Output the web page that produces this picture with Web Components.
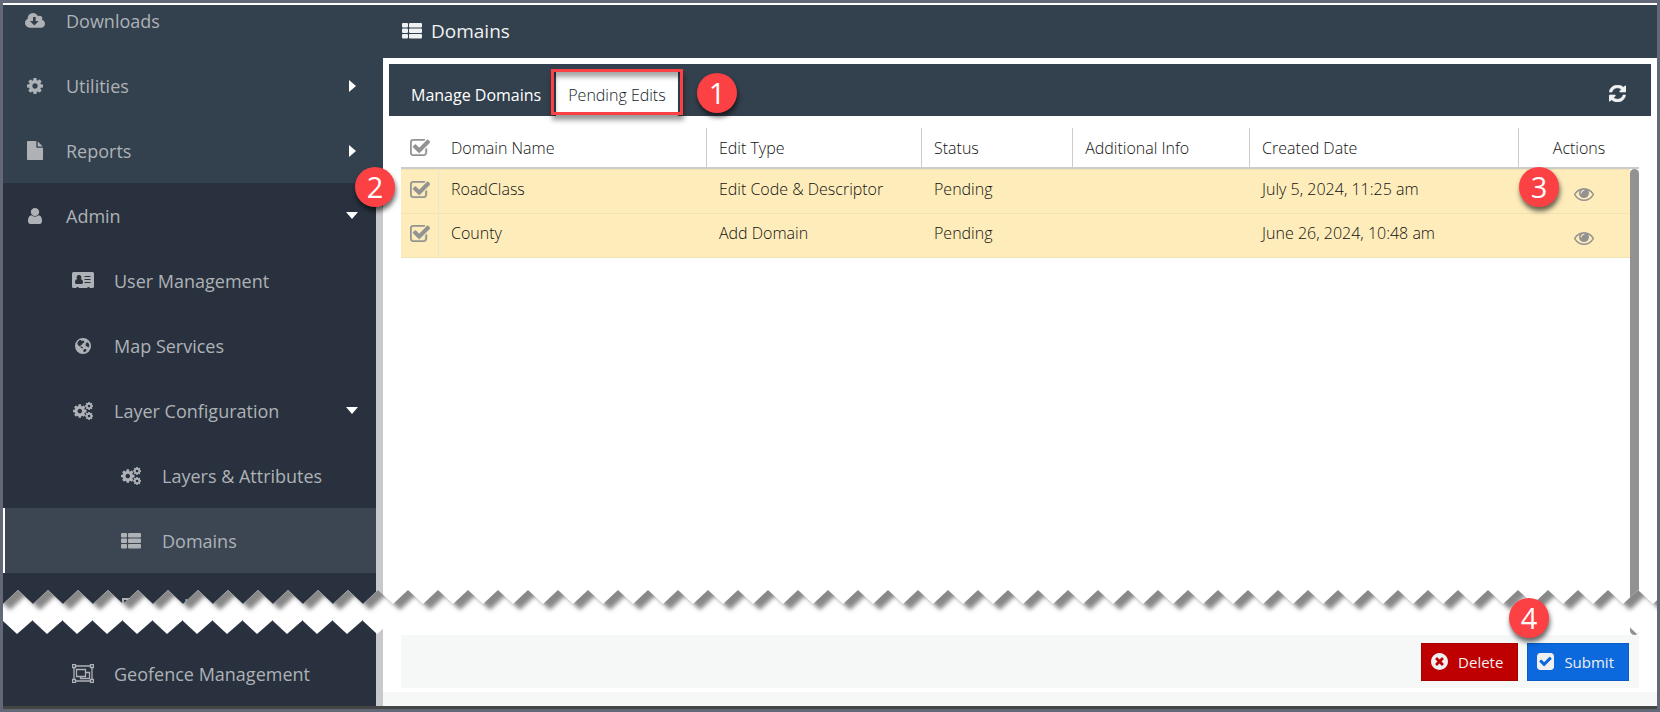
<!DOCTYPE html>
<html lang="en">
<head>
<meta charset="utf-8">
<meta name="viewport" content="width=device-width, initial-scale=1">
<title>Domains</title>
<style>
	html, body {
		margin: 0;
		height: 100%;
	}
	body {
		font-family: "Open Sans", "Noto Sans", sans-serif;
		font-size: 16px;
		color: #111;
	}
</style>
</head>
<body>
<app-frame>
	<side-nav slot="nav">
		<nav-item icon="cloud" label="Downloads"></nav-item>
		<nav-item icon="cog" label="Utilities" arrow="right"></nav-item>
		<nav-item icon="file" label="Reports" arrow="right"></nav-item>
		<nav-item icon="user" label="Admin" arrow="down" dark></nav-item>
		<nav-item icon="idcard" label="User Management" level="1" dark></nav-item>
		<nav-item icon="globe" label="Map Services" level="1" dark></nav-item>
		<nav-item icon="cogs" label="Layer Configuration" level="1" arrow="down" dark></nav-item>
		<nav-item icon="cogs" label="Layers &amp; Attributes" level="2" dark></nav-item>
		<nav-item icon="list" label="Domains" level="2" dark active></nav-item>
		<nav-item icon="table" label="Roles" level="2" dark></nav-item>
		<nav-item icon="group" label="Geofence Management" level="1" dark last></nav-item>
	</side-nav>
	<page-title icon="list">Domains</page-title>
	<tab-bar slot="tabs">
		<tab-button>Manage Domains</tab-button>
		<tab-button selected>Pending Edits</tab-button>
	</tab-bar>
	<domain-table slot="table"></domain-table>
	<action-button slot="actions" icon="times" kind="delete">Delete</action-button>
	<action-button slot="actions" icon="check" kind="submit">Submit</action-button>
</app-frame>

<script>
const COG = '<path d="M1152 896q0-106-75-181t-181-75-181 75-75 181 75 181 181 75 181-75 75-181zm512-109v222q0 12-8 23t-20 13l-185 28q-19 54-39 91 35 50 107 138 10 12 10 25t-9 23q-27 37-99 108t-94 71q-12 0-26-9l-138-108q-44 23-91 38-16 136-29 186-7 28-36 28h-222q-14 0-24.500-8.500t-11.500-21.500l-28-184q-49-16-90-37l-141 107q-10 9-25 9-14 0-25-11-126-114-165-168-7-10-7-23 0-12 8-23 15-21 51-66.500t54-70.500q-27-50-41-99l-183-27q-13-2-21-12.500t-8-23.500v-222q0-12 8-23t19-13l186-28q14-46 39-92-40-57-107-138-10-12-10-24 0-10 9-23 26-36 98.500-107.500t94.500-71.500q13 0 26 10l138 107q44-23 91-38 16-136 29-186 7-28 36-28h222q14 0 24.500 8.500t11.500 21.500l28 184q49 16 90 37l142-107q9-9 24-9 13 0 25 10 129 119 165 170 7 8 7 22 0 12-8 23-15 21-51 66.500t-54 70.500q26 50 41 98l183 28q13 2 21 12.500t8 23.500z"/>';

// name: [viewBox, width, height, markup]
const ICONS = {
	cloud: ['0 128 1920 1536', 20, 16, '<path d="M1280 928q0-14-9-23t-23-9h-224v-352q0-13-9.500-22.500t-22.500-9.500h-192q-13 0-22.500 9.500t-9.500 22.500v352h-224q-13 0-22.500 9.500t-9.500 22.500q0 14 9 23l352 352q9 9 23 9t23-9l351-351q10-12 10-24zm640 224q0 159-112.500 271.500t-271.500 112.500h-1088q-185 0-316.500-131.500t-131.500-316.500q0-130 70-240t188-165q-2-30-2-43 0-212 150-362t362-150q156 0 285.500 87t188.500 231q71-62 166-62 106 0 181 75t75 181q0 76-41 138 130 31 213.500 135.500t83.500 238.500z"/>'],
	cog: ['128 128 1536 1536', 16, 16, COG],
	cogs: ['0 0 20 18', 20, 18,
		'<g transform="translate(-1.100 1.200) scale(.0088)">' + COG + '</g>' +
		'<g transform="translate(11.400 -.700) scale(.0052)">' + COG + '</g>' +
		'<g transform="translate(11.400 9.300) scale(.0052)">' + COG + '</g>'],
	file: ['128 0 1536 1792', 16, 19, '<path d="M1152 512v-472q22 14 36 28l408 408q14 14 28 36h-472zm-128 32q0 40 28 68t68 28h544v1056q0 40-28 68t-68 28h-1344q-40 0-68-28t-28-68v-1600q0-40 28-68t68-28h800v544z"/>'],
	user: ['256 128 1280 1536', 14, 16, '<path d="M1536 1399q0 109-62.500 187t-150.500 78h-854q-88 0-150.500-78t-62.500-187q0-85 8.500-160.500t31.500-152 58.500-131 94-89 134.500-34.500q131 128 313 128t313-128q76 0 134.500 34.500t94 89 58.500 131 31.500 152 8.500 160.500zm-256-887q0 159-112.500 271.500t-271.500 112.500-271.500-112.500-112.500-271.500 112.500-271.500 271.500-112.500 271.500 112.500 112.500 271.500z"/>'],
	idcard: ['0 0 22 17', 22, 17, '<path fill-rule="evenodd" d="M1.500 0h19a1.500 1.500 0 0 1 1.500 1.500v13a1.500 1.500 0 0 1-1.500 1.500h-3v-1h-2v1h-9v-1h-2v1h-3a1.500 1.500 0 0 1-1.500-1.500v-13a1.500 1.500 0 0 1 1.500-1.500zM7 3a2.400 2.400 0 0 0-1.700 4.100C3.800 7.400 3 8.600 3 10.600c0 .800.500 1.400 1.300 1.400h5.400c.800 0 1.300-.600 1.300-1.400 0-2-.800-3.200-2.300-3.500A2.400 2.400 0 0 0 7 3zM12.500 4v1h6v-1zM12.500 7v1h6v-1zM12.500 10v1h6v-1z"/>'],
	globe: ['0 0 16 16', 16, 16, '<path fill-rule="evenodd" d="M8 0a8 8 0 1 1 0 16a8 8 0 0 1 0-16zM4.600 2.100L2.900 3.800 2.300 5.800l1.500 2.300 1.600.5.700 1.400 1.500.6.400-1-1.300-.9-1.200-.4.200-1.200 1.500-.3.500-1.500 1.800-1-.5-1.300-1.400-.4-1 .7-.6-1.200zM10.800 5.200l2-.9 1.200 1.600.3 2.300-1.100 1.300-1.300-1.200-1.300-.4zM8.800 11.200l2-.2.900 1-1 1.400-1.600.9-.9-1.400z"/>'],
	list: ['0 0 20 16', 20, 16, '<path d="M1 0h4q1 0 1 1v2.500q0 1-1 1H1q-1 0-1-1V1q0-1 1-1zM8 0h11q1 0 1 1v2.500q0 1-1 1H8q-1 0-1-1V1q0-1 1-1zM1 5.500h4q1 0 1 1V9q0 1-1 1H1q-1 0-1-1V6.500q0-1 1-1zM8 5.500h11q1 0 1 1V9q0 1-1 1H8q-1 0-1-1V6.500q0-1 1-1zM1 11h4q1 0 1 1v2.500q0 1-1 1H1q-1 0-1-1V12q0-1 1-1zM8 11h11q1 0 1 1v2.500q0 1-1 1H8q-1 0-1-1V12q0-1 1-1z"/>'],
	table: ['0 0 20 16', 20, 16, '<path fill-rule="evenodd" d="M1 0h18v16H1zM3 2v12h14V2zM5 4h4v3H5zM11 4h4v3h-4z"/>'],
	group: ['0 0 22 19', 22, 19, '<path fill="none" stroke="currentColor" d="M.5.500h3v3h-3zM18.500.500h3v3h-3zM.5 15.500h3v3h-3zM18.500 15.500h3v3h-3zM4 2h14M4 17h14M2 4v11M20 4v11M4.500 5.500h9v7h-9zM13.500 8.500h4v6h-9v-2" stroke-width="1.300"/>'],
	refresh: ['128 128 1536 1536', 17, 17, '<path stroke="currentColor" stroke-width="50" d="M1639 1056q0 5-1 7-64 268-268 434.500t-478 166.500q-146 0-282.500-55t-243.500-157l-129 129q-19 19-45 19t-45-19-19-45v-448q0-26 19-45t45-19h448q26 0 45 19t19 45-19 45l-137 137q71 66 161 102t187 36q134 0 250-65t186-179q11-17 53-117 8-23 30-23h192q13 0 22.500 9.500t9.500 22.500zm25-800v448q0 26-19 45t-45 19h-448q-26 0-45-19t-19-45 19-45l138-138q-148-137-349-137-134 0-250 65t-186 179q-11 17-53 117-8 23-30 23h-199q-13 0-22.500-9.500t-9.500-22.500v-7q65-268 270-434.500t480-166.500q146 0 284 55.500t245 156.500l130-129q19-19 45-19t45 19 19 45z"/>'],
	eye: ['0 384 1792 1152', 20, 13, '<path d="M1664 960q-152-236-381-353 61 104 61 225 0 185-131.500 316.500t-316.500 131.500-316.500-131.500-131.500-316.500q0-121 61-225-229 117-381 353 133 205 333.500 326.500t434.500 121.500 434.500-121.500 333.500-326.500zm-720-384q0-20-14-34t-34-14q-125 0-214.500 89.500t-89.500 214.500q0 20 14 34t34 14 34-14 14-34q0-86 61-147t147-61q20 0 34-14t14-34zm848 384q0 34-20 69-140 230-376.500 368.500t-499.500 138.500-499.500-139-376.500-368q-20-35-20-69t20-69q140-229 376.500-368t499.500-139 499.500 139 376.500 368q20 35 20 69z"/>'],
	times: ['128 128 1536 1536', 17, 17, '<path d="M1277 1122q0-26-19-45l-181-181 181-181q19-19 19-45 0-27-19-46l-90-90q-19-19-46-19-26 0-45 19l-181 181-181-181q-19-19-45-19-27 0-46 19l-90 90q-19 19-19 46 0 26 19 45l181 181-181 181q-19 19-19 45 0 27 19 46l90 90q19 19 46 19 26 0 45-19l181-181 181 181q19 19 45 19 27 0 46-19l90-90q19-19 19-46zm387-226q0 209-103 385.500t-279.500 279.500-385.500 103-385.500-103-279.500-279.500-103-385.500 103-385.500 279.500-279.500 385.500-103 385.500 103 279.500 279.500 103 385.500z"/>'],
	check: ['128 128 1536 1536', 17, 17, '<path d="M813 1299l614-614q19-19 19-45t-19-45l-102-102q-19-19-45-19t-45 19l-467 467-211-211q-19-19-45-19t-45 19l-102 102q-19 19-19 45t19 45l358 358q19 19 45 19t45-19zm851-883v960q0 119-84.500 203.500t-203.500 84.500h-960q-119 0-203.500-84.500t-84.500-203.500v-960q0-119 84.500-203.500t203.500-84.500h960q119 0 203.500 84.500t84.500 203.500z"/>'],
	checko: ['64 128 1664 1408', 20, 17, '<path stroke="currentColor" stroke-width="40" d="M1472 930v318q0 119-84.500 203.500t-203.500 84.500h-832q-119 0-203.500-84.500t-84.500-203.500v-832q0-119 84.500-203.500t203.500-84.500h832q63 0 117 25 15 7 18 23 3 17-9 29l-49 49q-10 10-23 10-3 0-9-2-23-6-45-6h-832q-66 0-113 47t-47 113v832q0 66 47 113t113 47h832q66 0 113-47t47-113v-254q0-13 9-22l64-64q10-10 23-10 6 0 12 3 20 8 20 29zm231-489l-814 814q-24 24-57 24t-57-24l-430-430q-24-24-24-57t24-57l110-110q24-24 57-24t57 24l263 263 647-647q24-24 57-24t57 24l110 110q24 24 24 57t-24 57z"/>'],
	right: ['0 0 7 12', 7, 12, '<path d="M0 0l7 6-7 6z"/>'],
	down: ['0 0 12 7', 12, 7, '<path d="M0 0h12l-6 7z"/>']
};

class FaIcon extends HTMLElement {
	constructor(){
		super();
		this.attachShadow({mode: 'open'});
	}
	connectedCallback() {
		const [box, width, height, markup] = ICONS[this.getAttribute('name')];
		this.shadowRoot.innerHTML = `
				<style>
				:host { display: inline-flex; }
				svg { display: block; fill: currentColor; }
				</style>
				<svg viewBox="${box}" width="${width}" height="${height}" preserveAspectRatio="none" aria-hidden="true">${markup}</svg>
		`;
	}
}

class NavItem extends HTMLElement {
	constructor(){
		super();
		this.attachShadow({mode: 'open'});
	}
	connectedCallback() {
		const arrow = this.getAttribute('arrow');
		const level = this.getAttribute('level') || 0;
		this.shadowRoot.innerHTML = `
				<style>
				:host {
					display: block;
					flex: none;
					background: #33404d;
				}
				:host([dark]) { background: #28313d; }
				:host([active]) {
					background: #3c4653;
					box-shadow: inset 2px 0 #fff;
				}
				:host([last]) { margin-top: auto; }
				a {
					display: flex;
					align-items: center;
					height: 65px;
					padding-left: calc(16px + ${level} * 48px);
					padding-right: 16px;
					color: #aeb2b7;
					font-size: 18px;
					text-decoration: none;
				}
				.icon {
					display: flex;
					justify-content: center;
					width: 32px;
					margin-right: 15px;
				}
				.label { flex: 1; white-space: nowrap; }
				.arrow {
					display: flex;
					justify-content: center;
					width: 16px;
					color: #fff;
				}
				</style>
				<a href="#">
					<span class="icon"><fa-icon name="${this.getAttribute('icon')}"></fa-icon></span>
					<span class="label"></span>
					${arrow ? `<span class="arrow"><fa-icon name="${arrow}"></fa-icon></span>` : ''}
				</a>
		`;
		this.shadowRoot.querySelector('.label').textContent = this.getAttribute('label');
	}
}

class SideNav extends HTMLElement {
	constructor(){
		super();
		let shadowRoot = this.attachShadow({mode: 'open'});
		shadowRoot.innerHTML = `
				<style>
				:host {
					display: flex;
					width: 380px;
					height: 100%;
					overflow: hidden;
					background: #33404d;
				}
				nav {
					flex: 1;
					display: flex;
					flex-direction: column;
					margin-top: -17px;
					background: #28313d;
				}
				.track {
					display: flex;
					width: 7px;
					padding-top: 200px;
				}
				.thumb {
					flex: 1;
					border-radius: 4px 4px 0 0;
					background: #c8c9cb;
				}
				</style>
				<nav><slot></slot></nav>
				<div class="track"><div class="thumb"></div></div>
		`;
	}
}

class PageTitle extends HTMLElement {
	constructor(){
		super();
		let shadowRoot = this.attachShadow({mode: 'open'});
		shadowRoot.innerHTML = `
				<style>
				:host {
					display: flex;
					align-items: center;
					box-sizing: border-box;
					height: 53px;
					padding: 0 0 2px 19px;
					background: #33404d;
					color: #f0f1f2;
				}
				h1 {
					margin: 0 0 0 9px;
					font-size: 19px;
					font-weight: 400;
				}
				</style>
				<fa-icon name="list"></fa-icon>
				<h1><slot></slot></h1>
		`;
	}
}

class TabButton extends HTMLElement {
	constructor(){
		super();
		let shadowRoot = this.attachShadow({mode: 'open'});
		shadowRoot.innerHTML = `
				<style>
				:host { display: flex; position: relative; }
				button {
					padding: 2px 12px 0;
					border: 0;
					background: none;
					color: #fff;
					font: inherit;
				}
				:host([selected]) button {
					background: #fff;
					color: #111c28;
					font-weight: 300;
				}
				/* highlight box drawn round the selected tab */
				:host([selected])::after {
					content: "";
					position: absolute;
					inset: -3px -5px 1px -5px;
					border: 3px solid #fc4144;
					box-shadow: 1px 5px 5px rgba(0, 0, 0, .4), inset 1px 5px 5px rgba(0, 0, 0, .35);
				}
				</style>
				<button type="button" role="tab"><slot></slot></button>
		`;
	}
	connectedCallback() {
		this.shadowRoot.querySelector('button').setAttribute('aria-selected', this.hasAttribute('selected'));
	}
}

class TabBar extends HTMLElement {
	constructor(){
		super();
		let shadowRoot = this.attachShadow({mode: 'open'});
		shadowRoot.innerHTML = `
				<style>
				:host {
					display: flex;
					height: 52px;
					box-sizing: border-box;
					padding: 8px 25px 0 10px;
					background: #33404d;
				}
				.tabs { display: flex; flex: 1; gap: 3px; }
				.refresh {
					display: flex;
					align-items: center;
					padding: 0 0 2px;
					border: 0;
					background: none;
					color: #f0f1f2;
				}
				</style>
				<div class="tabs" role="tablist"><slot></slot></div>
				<button class="refresh" type="button" aria-label="Refresh"><fa-icon name="refresh"></fa-icon></button>
		`;
	}
}

class TickBox extends HTMLElement {
	constructor(){
		super();
		this.attachShadow({mode: 'open'});
	}
	connectedCallback() {
		this.shadowRoot.innerHTML = `
				<style>
				:host { display: inline-flex; color: #929292; }
				label { display: grid; }
				input, fa-icon { grid-area: 1 / 1; }
				input {
					appearance: none;
					margin: 0;
					width: 20px;
					height: 17px;
				}
				fa-icon { pointer-events: none; }
				input:not(:checked) + fa-icon { opacity: .4; }
				</style>
				<label><input type="checkbox" checked aria-label="${this.getAttribute('label')}"><fa-icon name="checko"></fa-icon></label>
		`;
	}
}

const ROWS = [
	['RoadClass', 'Edit Code &amp; Descriptor', 'Pending', '', 'July 5, 2024, 11:25 am'],
	['County', 'Add Domain', 'Pending', '', 'June 26, 2024, 10:48 am']
];

class DomainTable extends HTMLElement {
	constructor(){
		super();
		let shadowRoot = this.attachShadow({mode: 'open'});
		const rows = ROWS.map(row => `
						<tr>
							<td class="tick"><tick-box label="Select ${row[0]}"></tick-box></td>
							${row.map(cell => `<td>${cell}</td>`).join('')}
							<td class="actions"><button type="button" aria-label="View ${row[0]}"><fa-icon name="eye"></fa-icon></button></td>
						</tr>`).join('');
		shadowRoot.innerHTML = `
				<style>
				:host {
					display: flex;
					flex: 1;
					min-height: 0;
				}
				.grid { flex: 1; }
				table {
					width: 100%;
					table-layout: fixed;
					border-collapse: separate;
					border-spacing: 0;
				}
				th, td {
					box-sizing: border-box;
					padding: 0 12px;
					text-align: left;
					font-weight: 300;
					white-space: nowrap;
				}
				th {
					height: 41px;
					border-bottom: 2px solid #ccc;
					border-right: 1px solid #ccc;
				}
				th:first-child, th:last-child { border-right: 0; }
				td {
					height: 44px;
					padding-bottom: 6px;
					border-bottom: 1px solid #f2e3b3;
					background: #feedbb;
				}
				tr:first-child td {
					height: 45px;
					border-top: 1px solid #f2e3b3;
				}
				.tick { padding: 0 9px 4px; }
				td.tick { padding-bottom: 8px; border-right: 1px solid #e8e4dc; }
				tick-box { vertical-align: middle; }
				th.actions { text-align: center; padding: 0 0 0 9px; }
				td.actions { text-align: center; padding: 6px 0 0 18px; }
				td button {
					padding: 0;
					border: 0;
					background: none;
					color: #929292;
					vertical-align: middle;
				}
				.scroll {
					display: flex;
					flex-direction: column;
					width: 9px;
				}
				.head { height: 39px; border-bottom: 2px solid #ccc; }
				.thumb {
					flex: 1;
					border-radius: 5px;
					background: #929292;
				}
				</style>
				<div class="grid">
					<table>
						<colgroup>
							<col style="width: 38px"><col style="width: 21.800%"><col style="width: 17.500%">
							<col style="width: 12.300%"><col style="width: 14.400%"><col><col style="width: 111px">
						</colgroup>
						<thead>
							<tr>
								<th class="tick"><tick-box label="Select all"></tick-box></th>
								<th>Domain Name</th><th>Edit Type</th><th>Status</th>
								<th>Additional Info</th><th>Created Date</th><th class="actions">Actions</th>
							</tr>
						</thead>
						<tbody>${rows}</tbody>
					</table>
				</div>
				<div class="scroll"><div class="head"></div><div class="thumb"></div></div>
		`;
	}
}

class ActionButton extends HTMLElement {
	constructor(){
		super();
		this.attachShadow({mode: 'open'});
	}
	connectedCallback() {
		this.shadowRoot.innerHTML = `
				<style>
				:host { display: block; }
				button {
					display: flex;
					align-items: center;
					gap: 10px;
					height: 38px;
					padding: 0 14px 0 9px;
					border: 1px solid #a80000;
					background: #bf0000;
					color: #f0f0f0;
					font: inherit;
					font-size: 15px;
				}
				:host([kind="submit"]) button {
					border-color: #0a5cc4;
					background: #0b68dd;
				}
				</style>
				<button type="button"><fa-icon name="${this.getAttribute('icon')}"></fa-icon><slot></slot></button>
		`;
	}
}

class StepBadge extends HTMLElement {
	constructor(){
		super();
		let shadowRoot = this.attachShadow({mode: 'open'});
		shadowRoot.innerHTML = `
				<style>
				:host {
					position: absolute;
					display: flex;
					align-items: center;
					justify-content: center;
					width: 40px;
					height: 40px;
					border-radius: 50%;
					background: #fc4144;
					color: #fff;
					font-size: 29px;
					line-height: 40px;
					box-shadow: 1px 4px 5px rgba(0, 0, 0, .6);
				}
				</style>
				<slot></slot>
		`;
	}
}

// white zigzag strip that cuts the page in two
class TearLine extends HTMLElement {
	constructor(){
		super();
		let shadowRoot = this.attachShadow({mode: 'open'});
		shadowRoot.innerHTML = `
				<style>
				:host {
					position: absolute;
					height: 44px;
					overflow: hidden;
					pointer-events: none;
				}
				svg { display: block; }
				</style>
				<svg width="100%" height="44" aria-hidden="true">
					<defs>
						<filter id="soft" x="-20%" y="-50%" width="140%" height="200%"><feGaussianBlur stdDeviation="2"/></filter>
						<clipPath id="band"><path d="M0 14L15 0 30 14V44H0z"/></clipPath>
						<pattern id="teeth" width="30" height="44" patternUnits="userSpaceOnUse">
							<path fill="#fff" d="M0 14L15 0 30 14V30L14 44 0 31z"/>
							<g clip-path="url(#band)">
								<path fill="#888" filter="url(#soft)" d="M-60-20H110V6L97 20 82 6 67 20 52 6 37 20 22 6 7 20-8 6-23 20-38 6-53 20z"/>
							</g>
						</pattern>
					</defs>
					<rect width="100%" height="44" fill="url(#teeth)"/>
				</svg>
		`;
	}
}

class AppFrame extends HTMLElement {
	constructor(){
		super();
		let shadowRoot = this.attachShadow({mode: 'open'});
		shadowRoot.innerHTML = `
				<style>
				:host {
					display: block;
					box-sizing: border-box;
					position: relative;
					height: 100vh;
					padding: 3px;
					background: #626877;
				}
				.window {
					display: flex;
					box-sizing: border-box;
					height: 100%;
					border-top: 2px solid #fff;
					border-bottom: 3px solid #444643;
				}
				main {
					flex: 1;
					display: flex;
					flex-direction: column;
					min-width: 0;
					background: #fff;
				}
				.panel {
					flex: 1;
					display: flex;
					flex-direction: column;
					min-height: 0;
					padding: 6px 6px 4px;
				}
				.content {
					flex: 1;
					display: flex;
					flex-direction: column;
					min-height: 0;
					padding: 12px 12px 0;
				}
				.actions {
					display: flex;
					align-items: center;
					justify-content: flex-end;
					gap: 9px;
					height: 53px;
					padding-right: 10px;
					background: #f6f8f8;
				}
				footer { height: 14px; background: #f6f8f8; }
				tear-line { left: 3px; right: 3px; bottom: 78px; }
				.one { left: 697px; top: 73px; }
				.two { left: 355px; top: 167px; }
				.three { right: 101px; top: 167px; }
				.four { right: 111px; bottom: 74px; }
				</style>
				<div class="window">
					<slot name="nav"></slot>
					<main>
						<slot></slot>
						<div class="panel">
							<slot name="tabs"></slot>
							<div class="content">
								<slot name="table"></slot>
								<div class="actions"><slot name="actions"></slot></div>
							</div>
						</div>
						<footer></footer>
					</main>
				</div>
				<tear-line></tear-line>
				<step-badge class="one">1</step-badge>
				<step-badge class="two">2</step-badge>
				<step-badge class="three">3</step-badge>
				<step-badge class="four">4</step-badge>
		`;
	}
}

customElements.define('fa-icon',FaIcon);
customElements.define('nav-item',NavItem);
customElements.define('side-nav',SideNav);
customElements.define('page-title',PageTitle);
customElements.define('tab-button',TabButton);
customElements.define('tab-bar',TabBar);
customElements.define('tick-box',TickBox);
customElements.define('domain-table',DomainTable);
customElements.define('action-button',ActionButton);
customElements.define('step-badge',StepBadge);
customElements.define('tear-line',TearLine);
customElements.define('app-frame',AppFrame);
</script>
</body>
</html>
